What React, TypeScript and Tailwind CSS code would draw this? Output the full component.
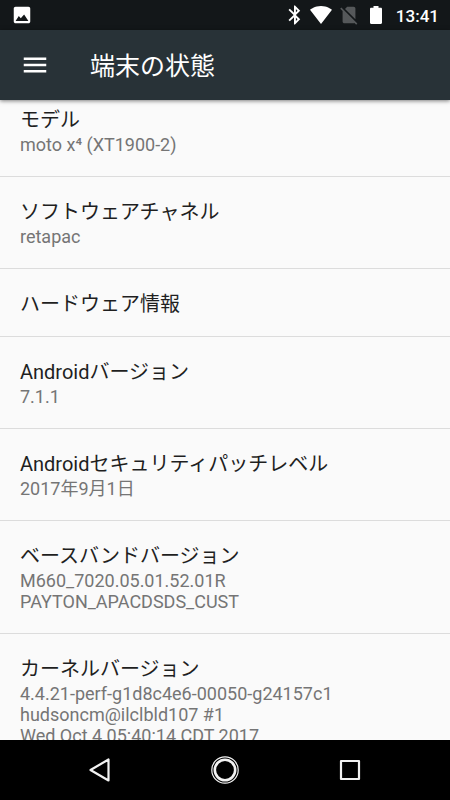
import React from 'react';

type InfoItem = {
  title: string;
  summary?: string[];
};

const items: InfoItem[] = [
  { title: 'モデル', summary: ['moto x⁴ (XT1900-2)'] },
  { title: 'ソフトウェアチャネル', summary: ['retapac'] },
  { title: 'ハードウェア情報' },
  { title: 'Androidバージョン', summary: ['7.1.1'] },
  { title: 'Androidセキュリティパッチレベル', summary: ['2017年9月1日'] },
  { title: 'ベースバンドバージョン', summary: ['M660_7020.05.01.52.01R', 'PAYTON_APACDSDS_CUST'] },
  {
    title: 'カーネルバージョン',
    summary: ['4.4.21-perf-g1d8c4e6-00050-g24157c1', 'hudsoncm@ilclbld107 #1', 'Wed Oct 4 05:40:14 CDT 2017']
  }
];

function StatusBar() {
  return (
    <div className="h-[30px] shrink-0 flex items-center justify-between px-[11px] bg-[#131719] text-white">
      <svg viewBox="0 0 24 24" className="w-[22px] h-[22px]" fill="currentColor" aria-hidden="true">
        <path d="M21 19V5c0-1.1-.9-2-2-2H5c-1.1 0-2 .9-2 2v14c0 1.1.9 2 2 2h14c1.1 0 2-.9 2-2zM8.5 13.2l2.2 2.4 3.6-4.1 4.700 7H5l3.5-5.3z" />
      </svg>
      <div className="flex items-center">
        <svg viewBox="0 0 14 20" className="w-[14px] h-5 mr-2" fill="currentColor" aria-hidden="true">
          <path d="M12.2 5.7 7 .6H6v7.2L1.8 3.7.5 5 5.6 10 .5 15l1.3 1.3L6 12.2v7.2h1l5.2-5.1L7.900 10l4.3-4.3zM7.9 4.1l1.6 1.6-1.6 1.6V4.1zm1.6 10.2-1.6 1.6v-3.2l1.6 1.6z" />
        </svg>
        <svg viewBox="0 0 22 18" className="w-[22px] h-[18px] mr-1.5" fill="currentColor" aria-hidden="true">
          <path d="M11 18 22 3.8C21.5 3.4 17.3 0 11 0S.5 3.4 0 3.8L11 18z" />
        </svg>
        <svg viewBox="0 0 24 24" className="w-[22px] h-[22px] mr-2.5 text-[#55585a]" fill="currentColor" aria-hidden="true">
          <path d="M19 5c0-1.1-.9-2-2-2h-7L7.66 5.34 19 16.68V5zM3.65 3.88 2.38 5.15 5 7.77V19c0 1.1.9 2 2 2h10c.35 0 .68-.1.97-.26l1.88 1.88 1.27-1.27L3.65 3.88z" />
        </svg>
        <svg viewBox="0 0 12 18" className="w-3 h-[18px] mr-[14px]" fill="currentColor" aria-hidden="true">
          <path d="M10.8 1.8H8.5V0h-5v1.8H1.2C.5 1.8 0 2.3 0 3v13.8C0 17.5.5 18 1.2 18h9.6c.7 0 1.2-.5 1.2-1.2V3c0-.7-.5-1.2-1.2-1.2z" />
        </svg>
        <time className="pt-px text-[17px] leading-5 font-medium">13:41</time>
      </div>
    </div>
  );
}

function AppBar() {
  return (
    <header className="relative z-10 h-[70px] shrink-0 flex items-center gap-10 px-5 bg-[#283237] text-white shadow-[0_1px_4px_rgba(0,0,0,0.5)]">
      <button type="button" aria-label="メニュー" className="w-[30px] h-[30px]">
        <svg viewBox="0 0 24 24" className="w-[30px] h-[30px]" fill="currentColor">
          <path d="M3 18h18v-2H3v2zm0-5h18v-2H3v2zm0-7v2h18V6H3z" />
        </svg>
      </button>
      <h1 className="pt-1 text-[25px] leading-8">端末の状態</h1>
    </header>
  );
}

function InfoRow({ title, summary }: InfoItem) {
  return (
    <li className="px-5 pt-[23px] pb-5 border-b border-[#dcdcdc]">
      <h2 className="text-[20px] leading-6 text-[#1f1f1f]">{title}</h2>
      {summary && (
        <p className="pt-0.5 pb-px text-[18px] leading-[21px] text-[#757575]">
          {summary.map((line) => (
            <span key={line} className="block">{line}</span>
          ))}
        </p>
      )}
    </li>
  );
}

function NavigationBar() {
  return (
    <nav className="h-[60px] shrink-0 flex items-center justify-center gap-[85px] bg-black text-[#f2f2f2]">
      <button type="button" aria-label="戻る" className="w-10 h-10 flex items-center justify-center">
        <svg viewBox="0 0 24 24" className="w-6 h-6" fill="none" stroke="currentColor" strokeWidth="2.2" strokeLinejoin="round">
          <path d="M20.5 1.500v21L2.500 12z" />
        </svg>
      </button>
      <button type="button" aria-label="ホーム" className="w-10 h-10 flex items-center justify-center">
        <svg viewBox="0 0 28 28" className="w-7 h-7" fill="none" stroke="currentColor">
          <circle cx="14" cy="14" r="13.2" strokeWidth="1.2" />
          <circle cx="14" cy="14" r="10.2" strokeWidth="2.6" />
        </svg>
      </button>
      <button type="button" aria-label="最近" className="w-10 h-10 flex items-center justify-center">
        <svg viewBox="0 0 24 24" className="w-6 h-6" fill="none" stroke="currentColor" strokeWidth="2.2" strokeLinejoin="round">
          <path d="M3 3h18v18H3z" />
        </svg>
      </button>
    </nav>
  );
}

export default function App() {
  return (
    <div lang="ja" className="h-screen flex flex-col bg-[#fafafa] font-[Roboto,'Noto_Sans_CJK_JP',sans-serif]">
      <StatusBar />
      <AppBar />
      <main className="flex-1 min-h-0 overflow-hidden">
        <ul className="-mt-[15px]">
          {items.map((item) => (
            <InfoRow key={item.title} {...item} />
          ))}
        </ul>
      </main>
      <NavigationBar />
    </div>
  );
}
